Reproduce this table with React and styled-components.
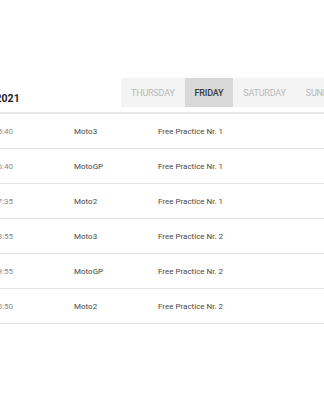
import React from 'react'
import styled, { createGlobalStyle } from 'styled-components';

const GlobalStyle = createGlobalStyle`
    html, body {
        margin: 0;
        padding: 0;
        background: #fff;
        overflow: hidden;
    }
    body {
        font-family: Roboto, "Liberation Sans", sans-serif;
        color: #444;
    }
`;

const Page = styled.div`
        width: 420px;
        margin-left: -42px;
        padding-top: 78px;
`;

const Header = styled.div`
        display: flex;
        align-items: flex-end;
        justify-content: space-between;
        border-bottom: 2px solid #e8e8e8;
        padding-bottom: 5px;
`;

const Title = styled.h2`
        margin: 0 0 1px 0;
        font-size: 10.5px;
        font-weight: 700;
        color: #222;
        line-height: 14px;
`;

const Tabs = styled.div`
        display: flex;
        background: #f4f4f4;
        width: 257px;
        height: 29px;
`;

const Tab = styled.div`
        display: flex;
        align-items: center;
        padding: 0 10px;
        font-size: 9px;
        text-transform: uppercase;
        letter-spacing: -0.2px;
        color: ${p => p.active ? '#3a3a3a' : '#b8b8b8'};
        font-weight: ${p => p.active ? 500 : 400};
        background: ${p => p.active ? '#d8d8d8' : 'transparent'};
`;

const Row = styled.div`
        display: flex;
        align-items: center;
        height: 34px;
        border-bottom: 1px solid #e2e2e2;
        font-size: 8px;
`;

const Time = styled.div`
        width: 116px;
        padding-left: 35px;
        box-sizing: border-box;
        color: #8a8a8a;
`;

const Category = styled.div`
        width: 84px;
        color: #484848;
`;

const Session = styled.div`
        color: #484848;
`;

const days = ['Thursday', 'Friday', 'Saturday', 'Sunday']

const data = [
    { time: '15:40', cat: 'Moto3', session: 'Free Practice Nr. 1' },
    { time: '16:40', cat: 'MotoGP', session: 'Free Practice Nr. 1' },
    { time: '17:35', cat: 'Moto2', session: 'Free Practice Nr. 1' },
    { time: '18:55', cat: 'Moto3', session: 'Free Practice Nr. 2' },
    { time: '19:55', cat: 'MotoGP', session: 'Free Practice Nr. 2' },
    { time: '20:50', cat: 'Moto2', session: 'Free Practice Nr. 2' },
]

function App() {
  return (
    <Page>
        <GlobalStyle />
        <Header>
            <Title>Season 2021</Title>
            <Tabs>
                {days.map(d => <Tab key={d} active={d === 'Friday'}>{d}</Tab>)}
            </Tabs>
        </Header>
        {data.map((d, i) => (
            <Row key={i}>
                <Time>{d.time}</Time>
                <Category>{d.cat}</Category>
                <Session>{d.session}</Session>
            </Row>
        ))}
    </Page>
  )
}

export default App
